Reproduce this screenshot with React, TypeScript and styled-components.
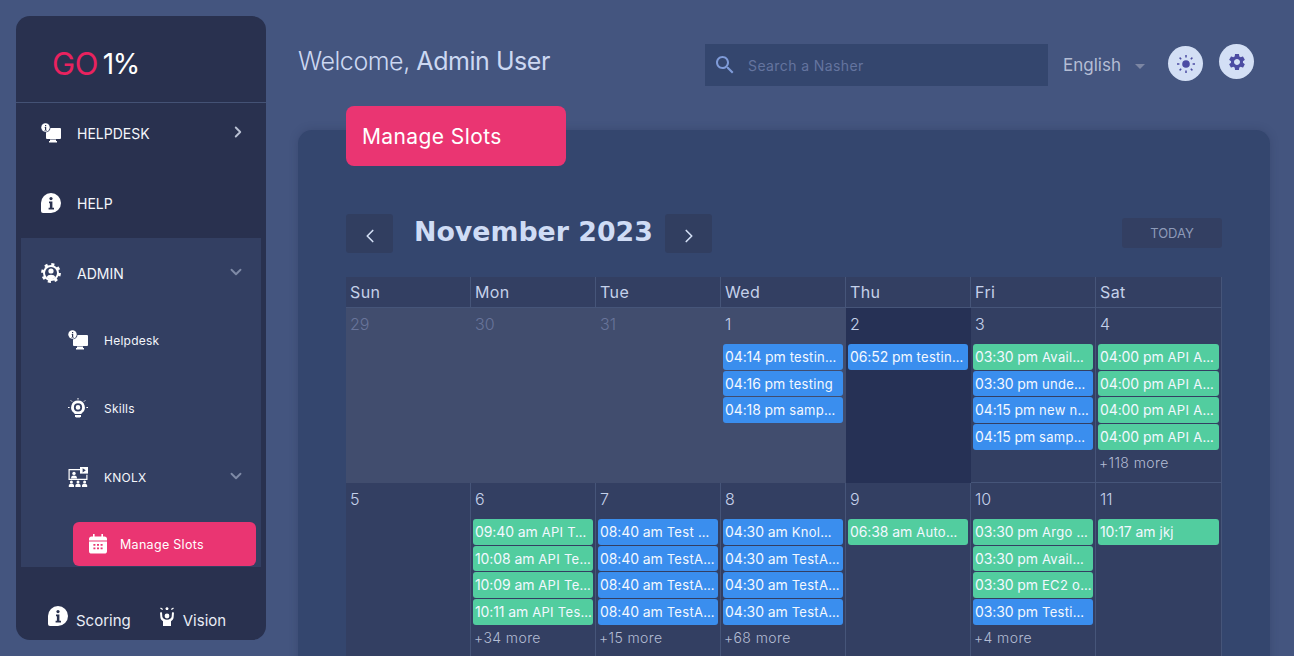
import React from "react";
import styled, { createGlobalStyle } from "styled-components";
import { ChevronDown, ChevronLeft, ChevronRight } from "lucide-react";

const Global = createGlobalStyle`
  html, body { margin: 0; padding: 0; height: 100%; overflow: hidden; background: #44557f; }
  * { box-sizing: border-box; }
  body { font-family: Inter, "Noto Sans", sans-serif; }
`;

const Page = styled.div`
  display: flex;
  align-items: flex-start;
  gap: 32px;
  height: 656px;
  padding: 16px 0 0 16px;
  overflow: hidden;
  background: #44557f;
`;

const Sidebar = styled.aside`
  flex: none;
  display: flex;
  flex-direction: column;
  width: 250px;
  height: 624px;
  border-radius: 14px;
  background: #29314f;
  color: #fff;
`;

const LogoBar = styled.div`
  display: flex;
  align-items: center;
  gap: 5px;
  height: 87px;
  padding: 9px 0 0 36px;
  border-bottom: 1px solid #445275;
  line-height: 1;
`;

const LogoGo = styled.span`
  color: #e9225f;
  font-size: 31px;
  font-weight: 400;
  letter-spacing: -0.5px;
`;

const LogoPct = styled.span`
  color: #fff;
  font-size: 28px;
  font-weight: 400;
  letter-spacing: -1.5px;
`;

const TopNav = styled.nav`
  flex: none;
  display: flex;
  flex-direction: column;
  gap: 10px;
  padding: 0 5px 5px;
`;

const NavRow = styled.div`
  flex: none;
  display: flex;
  align-items: center;
  gap: 16px;
  height: 60px;
  padding: 0 14px 0 20px;
  font-size: 14px;
  font-weight: 400;
  color: #f4f6fb;
`;

const NavLabel = styled.span`
  flex: 1;
  padding-top: 1px;
`;

const NavChevron = styled.span<{ $dim?: boolean }>`
  display: flex;
  color: ${(p) => (p.$dim ? "#7f8aa6" : "#b9c1d3")};
  margin: -2px ${(p) => (p.$dim ? 2 : 0)}px 0 0;
`;

const AdminPanel = styled.div`
  flex: none;
  display: flex;
  flex-direction: column;
  height: 329px;
  margin: 0 5px;
  padding-top: 5px;
  overflow: hidden;
  background: #333f62;
`;

const SubRow = styled.div<{ $height: number }>`
  flex: none;
  display: flex;
  align-items: center;
  gap: 16px;
  height: ${(p) => p.$height}px;
  padding: 0 14px 0 47px;
  font-size: 12px;
  font-weight: 400;
  letter-spacing: 0.25px;
  color: #f4f6fb;
`;

const ActivePill = styled.div`
  flex: none;
  display: flex;
  align-items: center;
  gap: 13px;
  width: 183px;
  height: 44px;
  margin: 7px 0 0 52px;
  padding-left: 16px;
  border-radius: 6px;
  background: #ea3572;
  color: #fff;
  font-size: 12.5px;
  font-weight: 400;
  letter-spacing: 0.3px;
`;

const FooterNav = styled.div`
  display: flex;
  gap: 28px;
  padding: 39px 0 0 32px;
  font-size: 15px;
  color: #e9edf6;
`;

const FooterItem = styled.div`
  display: flex;
  align-items: flex-start;
  gap: 8px;
`;

const FooterLabel = styled.span`
  margin-top: 6px;
  line-height: 18px;
`;

const Main = styled.main`
  flex: none;
  width: 972px;
`;

const Header = styled.header`
  display: flex;
  align-items: center;
  height: 98px;
  margin-bottom: 16px;
`;

const Welcome = styled.h1`
  flex: 1;
  margin: 0 0 8px;
  font-size: 25px;
  font-weight: 300;
  letter-spacing: -0.45px;
  color: #ccd8f2;
`;

const WelcomeName = styled.span`
  font-weight: 400;
`;

const SearchBox = styled.div`
  display: flex;
  align-items: center;
  gap: 11px;
  width: 343px;
  height: 42px;
  padding-left: 8px;
  background: #34466e;
  color: #7f9bd8;
  font-size: 14px;
`;

const SearchHint = styled.span`
  color: #64749f;
  letter-spacing: 0.4px;
`;

const Lang = styled.div`
  display: flex;
  align-items: center;
  gap: 14px;
  margin-left: 15px;
  width: 105px;
  color: #b4bdd4;
  font-size: 17px;
`;

const Caret = styled.span`
  width: 0;
  height: 0;
  margin-top: 2px;
  border-left: 5px solid transparent;
  border-right: 5px solid transparent;
  border-top: 5px solid #7c86a3;
`;

const RoundButton = styled.button<{ $lift: number }>`
  display: flex;
  align-items: center;
  justify-content: center;
  flex: none;
  width: 35px;
  height: 35px;
  margin: 0 16px ${(p) => p.$lift}px 0;
  padding: 0;
  border: 0;
  border-radius: 50%;
  background: #d3dff5;
  color: #4c4ca3;
`;

const Card = styled.section`
  position: relative;
  height: 600px;
  padding: 84px 48px 0;
  border-radius: 14px;
  background: #34466e;
  box-shadow: 0 0 8px rgba(30, 40, 70, 0.25);
`;

const Tab = styled.div`
  position: absolute;
  top: -24px;
  left: 48px;
  display: flex;
  align-items: center;
  width: 220px;
  height: 60px;
  padding-left: 16px;
  border-radius: 8px;
  background: #ea3572;
  color: #fff;
  font-size: 21px;
  font-weight: 400;
  letter-spacing: 0.4px;
`;

const Toolbar = styled.div`
  display: flex;
  align-items: flex-start;
  height: 63px;
`;

const NavButton = styled.button`
  display: flex;
  align-items: center;
  justify-content: center;
  width: 47px;
  height: 39px;
  padding: 4px 0 0;
  border: 0;
  border-radius: 3px;
  background: #313e60;
  color: #d3dff5;
`;

const MonthTitle = styled.h2`
  margin: 0;
  width: 272px;
  padding-left: 21px;
  font-family: "DejaVu Sans", sans-serif;
  font-size: 26.8px;
  font-weight: 700;
  line-height: 36px;
  color: #cfdcf5;
  white-space: nowrap;
`;

const TodayButton = styled.button`
  margin: 4px 0 0 auto;
  width: 100px;
  height: 30px;
  padding: 0;
  border: 0;
  border-radius: 3px;
  background: #333f62;
  color: #8d9ab8;
  font-family: inherit;
  font-size: 13px;
`;

const Grid = styled.div`
  display: grid;
  grid-template-columns: repeat(6, 125px) minmax(0, 1fr);
`;

const HeadCell = styled.div`
  height: 31px;
  padding: 5px 4px 0;
  border-right: 1px solid #465579;
  border-bottom: 1px solid #465579;
  background: #333f62;
  color: #c5d1ea;
  font-size: 16px;
  letter-spacing: 0.4px;
  line-height: 20px;
`;

type Tone = "normal" | "off" | "today";
const toneBg: Record<Tone, string> = { normal: "#333f62", off: "#414d6e", today: "#263155" };

const DayCell = styled.div<{ $tone: Tone }>`
  height: 175px;
  padding: 5px 2px 0 2px;
  border-right: 1px solid ${(p) => (p.$tone === "normal" ? "#465579" : "transparent")};
  border-bottom: 1px solid ${(p) => (p.$tone === "normal" ? "#465579" : "transparent")};
  background: ${(p) => toneBg[p.$tone]};
`;

const DateNum = styled.div<{ $muted?: boolean }>`
  height: 31px;
  padding-left: 2px;
  color: ${(p) => (p.$muted ? "#68749a" : "#c5d1ea")};
  font-size: 16px;
  font-weight: 300;
  line-height: 22px;
`;

const Events = styled.div`
  display: flex;
  flex-direction: column;
  gap: 1px;
`;

const Event = styled.div<{ $kind: "b" | "g" }>`
  height: 25.67px;
  padding: 0 2px;
  border-radius: 3px;
  background: ${(p) => (p.$kind === "b" ? "#3a8eee" : "#52cd9f")};
  color: #f3f8ff;
  font-size: 13px;
  letter-spacing: 0.3px;
  line-height: 25px;
  white-space: nowrap;
  overflow: hidden;
`;

const EventTime = styled.span`
  font-size: 14px;
  font-weight: 400;
  letter-spacing: -0.1px;
  margin-right: 4px;
`;

const More = styled.div`
  padding: 3px 1px 0;
  color: #b4bdd4;
  font-size: 14px;
  font-weight: 300;
  letter-spacing: 0.4px;
  line-height: 20px;
`;

type Ev = [string, string, "b" | "g"];
type Day = { d: string; tone?: Tone; muted?: boolean; ev?: Ev[]; more?: string };

const heads = ["Sun", "Mon", "Tue", "Wed", "Thu", "Fri", "Sat"];
const days: Day[] = [
  { d: "29", tone: "off", muted: true },
  { d: "30", tone: "off", muted: true },
  { d: "31", tone: "off", muted: true },
  { d: "1", tone: "off", ev: [["04:14 pm", "testin…", "b"], ["04:16 pm", "testing", "b"], ["04:18 pm", "samp…", "b"]] },
  { d: "2", tone: "today", ev: [["06:52 pm", "testin…", "b"]] },
  { d: "3", ev: [["03:30 pm", "Avail…", "g"], ["03:30 pm", "unde…", "b"], ["04:15 pm", "new n…", "b"], ["04:15 pm", "samp…", "b"]] },
  { d: "4", more: "+118 more", ev: [["04:00 pm", "API A…", "g"], ["04:00 pm", "API A…", "g"], ["04:00 pm", "API A…", "g"], ["04:00 pm", "API A…", "g"]] },
  { d: "5" },
  { d: "6", more: "+34 more", ev: [["09:40 am", "API T…", "g"], ["10:08 am", "API Te…", "g"], ["10:09 am", "API Te…", "g"], ["10:11 am", "API Tes…", "g"]] },
  { d: "7", more: "+15 more", ev: [["08:40 am", "Test …", "b"], ["08:40 am", "TestA…", "b"], ["08:40 am", "TestA…", "b"], ["08:40 am", "TestA…", "b"]] },
  { d: "8", more: "+68 more", ev: [["04:30 am", "Knol…", "b"], ["04:30 am", "TestA…", "b"], ["04:30 am", "TestA…", "b"], ["04:30 am", "TestA…", "b"]] },
  { d: "9", ev: [["06:38 am", "Auto…", "g"]] },
  { d: "10", more: "+4 more", ev: [["03:30 pm", "Argo …", "g"], ["03:30 pm", "Avail…", "g"], ["03:30 pm", "EC2 o…", "g"], ["03:30 pm", "Testi…", "b"]] },
  { d: "11", ev: [["10:17 am", "jkj", "g"]] },
];

const bg = "#29314f";
const panel = "#333f62";

const MonitorIcon = () => (
  <svg width="20" height="20" viewBox="0 0 20 20">
    <rect x="5" y="5" width="15" height="11" rx="1" fill="#fff" />
    <path d="M9 16.500h6V18h1v1.500H8V18h1z" fill="#fff" />
    <circle cx="4.500" cy="4.500" r="5" fill={panel} />
    <circle cx="4.500" cy="4.500" r="4.200" fill="#fff" />
    <path d="M4 2h1.200v1.200H4zM3.500 4h1.700v3H6v.6H3.300V7h.7V4.600h-.5z" fill={bg} />
  </svg>
);

const InfoIcon = ({ stem = bg }: { stem?: string }) => (
  <svg width="20" height="20" viewBox="0 0 20 20">
    <path d="M10 0a10 10 0 0 1 0 20H2a2 2 0 0 1-2-2v-8A10 10 0 0 1 10 0z" fill="#fff" />
    <circle cx="10" cy="5.600" r="1.600" fill={stem} />
    <path d="M8 8.600h3.400v6.200H13v1.600H7.600v-1.600h1.300v-4.600H8z" fill={stem} />
  </svg>
);

const AdminIcon = () => (
  <svg width="20" height="20" viewBox="0 0 20 20">
    <circle cx="10" cy="10" r="8" fill="#fff" />
    <circle cx="10" cy="10" r="8.400" fill="none" stroke="#fff" strokeWidth="3" strokeDasharray="3 3.600" />
    <circle cx="10" cy="10" r="6" fill={panel} />
    <circle cx="10" cy="8" r="2.600" fill="#fff" />
    <path d="M5.400 14.200a5 4 0 0 1 9.200 0A6.400 6.400 0 0 1 5.400 14.200z" fill="#fff" />
  </svg>
);

const SkillsIcon = () => (
  <svg width="20" height="20" viewBox="0 0 20 20">
    <path d="M10 2.600a6.800 6.800 0 0 0-3.600 12.600V16h7.200v-.8A6.800 6.800 0 0 0 10 2.600z" fill="#fff" />
    <path d="M7 17h6v1.200l-1 1.300H8l-1-1.300z" fill="#fff" />
    <circle cx="10" cy="9.400" r="3.200" fill="none" stroke={panel} strokeWidth="1.800" />
    <path d="M10 0v1.600M2.800 2.400l1.200 1.200M17.200 2.400L16 3.600M0 9.500h1.600M18.400 9.500H20" stroke="#fff" strokeWidth="1" />
  </svg>
);

const KnolxIcon = () => (
  <svg width="20" height="20" viewBox="0 0 20 20">
    <path d="M.5 2h12v1.200H1.700v8.600h16.600v-4h1.200v5.200H.5z" fill="#fff" />
    <rect x="12" y="0" width="8" height="6.600" fill="#fff" />
    <path d="M14.600 1.200l3.200 2.100-3.200 2.100z" fill={panel} />
    <circle cx="6" cy="6.400" r="1.700" fill="#fff" />
    <path d="M3 11.500c0-2.400 1.400-3 3-3s3 .6 3 3z" fill="#fff" />
    <circle cx="3.400" cy="15" r="1.500" fill="#fff" />
    <circle cx="10" cy="15" r="1.500" fill="#fff" />
    <circle cx="16.600" cy="15" r="1.500" fill="#fff" />
    <path d="M.8 20v-1.600c0-1 1.200-1.600 2.600-1.600s2.600.6 2.600 1.600V20zM7.400 20v-1.600c0-1 1.200-1.600 2.600-1.600s2.600.6 2.600 1.600V20zM14 20v-1.600c0-1 1.200-1.600 2.600-1.600s2.600.6 2.600 1.600V20z" fill="#fff" />
  </svg>
);

const CalendarIcon = () => (
  <svg width="18" height="20" viewBox="0 0 18 20">
    <path d="M4 0h1.600v2.400h6.800V0H14v2.400h1.400A2.600 2.600 0 0 1 18 5v1.600H0V5a2.600 2.600 0 0 1 2.600-2.600H4z" fill="#fff" />
    <path d="M0 7.600h18V17a2.600 2.600 0 0 1-2.600 2.600H2.600A2.600 2.600 0 0 1 0 17z" fill="#fff" />
    <path d="M4.400 10h2v1.800h-2zM8 10h2v1.800H8zM11.600 10h2v1.800h-2zM4.400 13.400h2v1.800h-2zM8 13.400h2v1.800H8zM11.600 13.400h2v1.800h-2z" fill="#ea3572" />
  </svg>
);

const VisionIcon = () => (
  <svg width="16" height="20" viewBox="0 0 16 20">
    <circle cx="8" cy="10" r="2.400" fill="#fff" />
    <path d="M1 6.500l2-.3.3 4.300c.2 1.900 2.200 3.300 4.700 3.300s4.500-1.400 4.700-3.300l.3-4.300 2 .3-.4 4.900c-.2 1.700-1.300 3-2.600 3.800V20H4v-4.800c-1.300-.8-2.400-2.100-2.600-3.800z" fill="#fff" />
    <path d="M8 1l1.600 1.200-.6 1.800H7l-.6-1.800z" fill="#fff" />
    <path d="M1.500 2l2.200 1.600M14.500 2l-2.200 1.600" stroke="#fff" strokeWidth="1.200" />
  </svg>
);

const SearchGlyph = () => (
  <svg width="24" height="24" viewBox="0 0 24 24">
    <path
      fill="currentColor"
      d="M15.500 14h-.79l-.28-.27C15.410 12.590 16 11.110 16 9.500 16 5.910 13.090 3 9.500 3S3 5.910 3 9.500 5.910 16 9.500 16c1.610 0 3.090-.59 4.230-1.570l.27.28v.79l5 4.990L20.490 19l-4.990-5zm-6 0C7.010 14 5 11.990 5 9.500S7.010 5 9.500 5 14 7.010 14 9.500 11.990 14 9.500 14z"
    />
  </svg>
);

const SunIcon = () => (
  <svg width="18" height="18" viewBox="0 0 18 18">
    <circle cx="9" cy="9" r="3.800" fill="currentColor" />
    <path d="M9 0v2.400M9 15.600V18M0 9h2.400M15.600 9H18M2.600 2.600l1.600 1.600M13.800 13.800l1.600 1.600M15.400 2.600l-1.600 1.600M4.200 13.800l-1.600 1.600" stroke="currentColor" strokeWidth="1.500" />
  </svg>
);

const GearIcon = () => (
  <svg width="20" height="20" viewBox="0 0 24 24">
    <path
      fill="currentColor"
      d="M19.14 12.94c.04-.3.06-.61.06-.94 0-.32-.02-.64-.07-.94l2.03-1.580c.18-.14.23-.41.12-.61l-1.920-3.320c-.12-.22-.37-.29-.59-.22l-2.390.96c-.5-.38-1.030-.7-1.620-.94l-.36-2.540c-.04-.24-.24-.41-.48-.41h-3.840c-.24 0-.43.17-.47.41l-.36 2.540c-.59.24-1.130.57-1.620.94l-2.390-.96c-.22-.08-.47 0-.59.22L2.740 8.870c-.12.21-.08.47.12.61l2.030 1.580c-.05.3-.09.63-.09.94s.02.64.07.94l-2.030 1.580c-.18.14-.23.41-.12.61l1.920 3.320c.12.22.37.29.59.22l2.390-.96c.5.38 1.030.7 1.620.94l.36 2.540c.05.24.24.41.48.41h3.840c.24 0 .44-.17.47-.41l.36-2.540c.59-.24 1.130-.56 1.620-.94l2.390.96c.22.08.47 0 .59-.22l1.920-3.320c.12-.22.07-.47-.12-.61l-2.010-1.580zM12 15.600c-1.980 0-3.600-1.620-3.600-3.600s1.620-3.600 3.600-3.600 3.600 1.620 3.600 3.600-1.620 3.600-3.600 3.600z"
    />
  </svg>
);

export default function App() {
  return (
    <>
      <Global />
      <Page>
        <Sidebar>
          <LogoBar>
            <LogoGo>GO</LogoGo>
            <LogoPct>1%</LogoPct>
          </LogoBar>
          <TopNav>
            <NavRow>
              <MonitorIcon />
              <NavLabel>HELPDESK</NavLabel>
              <NavChevron>
                <ChevronRight size={18} strokeWidth={2.5} />
              </NavChevron>
            </NavRow>
            <NavRow>
              <InfoIcon />
              <NavLabel>HELP</NavLabel>
            </NavRow>
          </TopNav>
          <AdminPanel>
            <NavRow>
              <AdminIcon />
              <NavLabel>ADMIN</NavLabel>
              <NavChevron $dim>
                <ChevronDown size={18} strokeWidth={2.5} />
              </NavChevron>
            </NavRow>
            <SubRow $height={74}>
              <MonitorIcon />
              <NavLabel>Helpdesk</NavLabel>
            </SubRow>
            <SubRow $height={62}>
              <SkillsIcon />
              <NavLabel>Skills</NavLabel>
            </SubRow>
            <SubRow $height={76}>
              <KnolxIcon />
              <NavLabel>KNOLX</NavLabel>
              <NavChevron $dim>
                <ChevronDown size={18} strokeWidth={2.5} />
              </NavChevron>
            </SubRow>
            <ActivePill>
              <CalendarIcon />
              Manage Slots
            </ActivePill>
          </AdminPanel>
          <FooterNav>
            <FooterItem>
              <InfoIcon />
              <FooterLabel>Scoring</FooterLabel>
            </FooterItem>
            <FooterItem>
              <VisionIcon />
              <FooterLabel>Vision</FooterLabel>
            </FooterItem>
          </FooterNav>
        </Sidebar>
        <Main>
          <Header>
            <Welcome>
              Welcome, <WelcomeName>Admin User</WelcomeName>
            </Welcome>
            <SearchBox>
              <SearchGlyph />
              <SearchHint>Search a Nasher</SearchHint>
            </SearchBox>
            <Lang>
              English
              <Caret />
            </Lang>
            <RoundButton $lift={3} aria-label="theme">
              <SunIcon />
            </RoundButton>
            <RoundButton $lift={7} aria-label="settings">
              <GearIcon />
            </RoundButton>
          </Header>
          <Card>
            <Tab>Manage Slots</Tab>
            <Toolbar>
              <NavButton aria-label="previous">
                <ChevronLeft size={22} strokeWidth={1.8} />
              </NavButton>
              <MonthTitle>November 2023</MonthTitle>
              <NavButton aria-label="next">
                <ChevronRight size={22} strokeWidth={1.8} />
              </NavButton>
              <TodayButton>TODAY</TodayButton>
            </Toolbar>
            <Grid>
              {heads.map((h) => (
                <HeadCell key={h}>{h}</HeadCell>
              ))}
              {days.map((day) => (
                <DayCell key={day.d} $tone={day.tone ?? "normal"}>
                  <DateNum $muted={day.muted}>{day.d}</DateNum>
                  <Events>
                    {day.ev?.map(([time, title, kind], i) => (
                      <Event key={i} $kind={kind}>
                        <EventTime>{time}</EventTime>
                        {title}
                      </Event>
                    ))}
                  </Events>
                  {day.more && <More>{day.more}</More>}
                </DayCell>
              ))}
            </Grid>
          </Card>
        </Main>
      </Page>
    </>
  );
}
